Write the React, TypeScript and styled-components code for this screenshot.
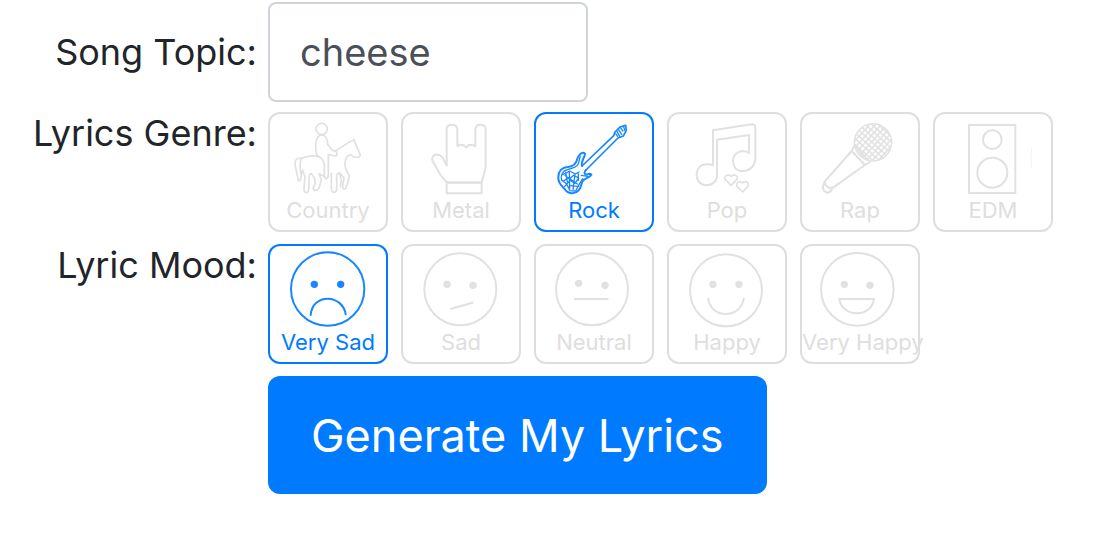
import React, { useState } from "react";
import styled, { createGlobalStyle } from "styled-components";

const GlobalStyle = createGlobalStyle`
  *, *::before, *::after { box-sizing: border-box; }
  body {
    margin: 0;
    background: #fff;
    color: #212529;
    font-family: Inter, "Liberation Sans", sans-serif;
  }
`;

const Form = styled.form`
  display: flex;
  flex-direction: column;
  gap: 12px;
  padding: 2px 0 40px;
`;

const Row = styled.div`
  display: grid;
  grid-template-columns: 257px 1fr;
  column-gap: 11px;
`;

const TopicRow = styled(Row)`
  align-items: center;
  margin-bottom: -2px;
`;

const Group = styled.fieldset`
  display: grid;
  grid-template-columns: 257px 1fr;
  column-gap: 11px;
  min-width: 0;
  margin: 0;
  padding: 0;
  border: 0;
`;

const fieldText = `
  font-size: 36px;
  line-height: 42px;
  text-align: right;
  white-space: nowrap;
`;

const FieldLabel = styled.label`
  ${fieldText}
`;

const GroupLabel = styled.legend`
  ${fieldText}
  float: left;
  width: 100%;
  padding: 0;
`;

const TopicInput = styled.input`
  width: 320px;
  height: 100px;
  padding: 0 30px;
  border: 2px solid #ced4da;
  border-radius: 8px;
  background: #fff;
  color: #495057;
  font-family: inherit;
  font-size: 38px;
`;

const Tiles = styled.div`
  display: flex;
  flex-wrap: wrap;
  gap: 12px 13px;
`;

const Tile = styled.label<{ $active: boolean }>`
  position: relative;
  width: 120px;
  height: 120px;
  padding-top: 4px;
  border: 2px solid currentColor;
  border-radius: 12px;
  color: ${(p) => (p.$active ? "#007bff" : "#dedede")};
  cursor: pointer;
`;

const HiddenRadio = styled.input`
  position: absolute;
  inset: 0;
  margin: 0;
  opacity: 0;
`;

const Icon = styled.svg`
  display: block;
  width: 80px;
  height: 80px;
  margin: 0 auto;
  fill: none;
  stroke: currentColor;
  stroke-width: 6;
  stroke-linecap: round;
  stroke-linejoin: round;
  opacity: 0.9;
`;

const TileText = styled.span`
  display: block;
  font-size: 22px;
  line-height: 24px;
  text-align: center;
  white-space: nowrap;
`;

const Submit = styled.button`
  grid-column: 2;
  justify-self: start;
  height: 118px;
  padding: 0 43px;
  border: 0;
  border-radius: 12px;
  background: #007bff;
  color: #fff;
  font-family: inherit;
  font-size: 45px;
  cursor: pointer;
`;

interface Option {
  name: string;
  viewBox: string;
  art: React.ReactNode;
}

const eye = (cx: number, cy: number) => (
  <circle cx={cx} cy={cy} r="11" fill="currentColor" stroke="none" />
);

const genres: Option[] = [
  {
    name: "Country",
    viewBox: "84 39 240 240",
    art: (
      <g strokeWidth="5">
        <circle cx="185" cy="72" r="17" />
        <path d="M178 92 C168 97 167 110 167 124 C167 146 170 152 178 156 C190 162 193 175 193 186 L193 216 C196 224 204 222 205 212 L205 148 L222 153 L230 152 L231 142 L215 134 L203 118 C202 102 198 90 186 90 Z" />
        <path d="M228 137 L266 112 L277 108 L282 103 L285 113 L301 150 L297 157 L283 156 L272 149 L262 154 C254 166 253 178 257 190 L268 214 L259 246 C257 254 248 254 248 246 L252 218 L238 203" />
        <path d="M214 205 L214 250 C214 266 230 266 230 252 L230 210 L238 204 L244 224 L241 246" />
        <path d="M175 154 C158 151 140 153 124 160 C108 158 103 168 106 184 L111 208 L116 228 C122 226 124 216 123 208 L128 196 L135 216 L132 252 C132 267 144 266 146 254 L148 210 L153 205 L163 218 L166 236 L159 249 C161 260 174 258 178 246 L184 224 L177 206 L193 214" />
        <path d="M124 160 C118 174 119 188 123 208" />
      </g>
    ),
  },
  {
    name: "Metal",
    viewBox: "78 39 240 240",
    art: (
      <>
        <path d="M155 181 L155 72 C156 55 185 55 187 72 L187 123 L195 119 L206 121 L214 127 L222 120 L232 119 L241 124 L241 72 C243 55 270 55 272 72 L272 188 L260 232 L155 232 C147 222 136 213 130 198 L113 168 C107 154 122 145 135 151 C144 156 148 168 155 181" />
        <path d="M155 233 H260 V265 H155 Z" />
      </>
    ),
  },
  {
    name: "Rock",
    viewBox: "78 39 240 240",
    art: (
      <>
        <path d="M162 183 L258 91 L260 82 L276 66 L293 61 L295 76 L286 93 L270 99 L174 195" strokeWidth="5" />
        <path d="M263 86 L269 94 M277 68 L285 78 M286 63 L291 77 M271 73 L281 88 M267 79 L275 94" strokeWidth="4" />
        <path d="M162 183 C158 168 171 157 171 146 C164 139 151 149 148 161 C146 174 136 184 120 186 C102 187 91 199 91 216 C89 233 101 243 110 252 C119 267 141 269 151 257 C162 247 158 234 166 226 C174 219 185 218 190 209 C185 203 180 209 173 209 C168 206 169 199 174 195" />
        <path d="M157 153 C153 163 155 172 148 181 C140 190 127 190 116 195 C101 199 98 213 101 225 M104 209 L125 198 L142 207 L153 201 M101 225 L116 237 L126 257 L143 258 L153 239 L164 221 M111 211 L124 222 L137 211 L152 219 L141 235 L127 226 L116 237 M124 202 L125 250 M141 207 L135 253 M106 229 L120 218 L148 237 M128 242 L151 244 M110 244 L123 230 M151 206 L151 226 M113 203 L118 230 M160 211 L180 214" strokeWidth="4" />
      </>
    ),
  },
  {
    name: "Pop",
    viewBox: "81 39 240 240",
    art: (
      <>
        <path d="M159 180 L159 76 L274 58 Q286 58 286 68 L286 164 C282 185 269 198 249 198 C228 198 219 184 219 168 C219 148 235 138 249 138 Q260 139 267 144 L267 90 L171 104 L171 217 C166 232 154 241 139 241 C122 240 110 228 110 209 C110 190 123 178 139 178 Q150 177 159 180 Z" />
        <path d="M213 241 L196 224 C191 214 203 204 213 214 C224 204 236 214 230 224 Z M248 261 L231 244 C227 234 238 224 248 234 C258 224 268 234 264 244 Z" strokeWidth="5" />
      </>
    ),
  },
  {
    name: "Rap",
    viewBox: "81 39 240 240",
    art: (
      <>
        <defs>
          <pattern id="mesh" width="13" height="13" patternUnits="userSpaceOnUse" patternTransform="rotate(42)">
            <path d="M0 0 H13 M0 0 V13" stroke="currentColor" strokeWidth="9" />
          </pattern>
        </defs>
        <circle cx="240" cy="112" r="56" fill="url(#mesh)" strokeWidth="4" />
        <path d="M184 122 L176 138 L216 180 L231 171 M190 128 L226 166" />
        <path d="M176 138 L95 230 L98 241 L109 250 L121 247 L216 180 M95 232 L89 245 L92 257 L103 264 L114 258 L118 249" />
      </>
    ),
  },
  {
    name: "EDM",
    viewBox: "84 39 240 240",
    art: (
      <>
        <rect x="132" y="60" width="139" height="204" />
        <circle cx="202" cy="104" r="28" />
        <circle cx="202" cy="203" r="45" />
        <path d="M320 130 Q316 157 320 190" strokeWidth="2" opacity="0.6" />
      </>
    ),
  },
];

const moods: Option[] = [
  {
    name: "Very Sad",
    viewBox: "84 36 240 240",
    art: (
      <>
        <circle cx="203" cy="153" r="110" />
        {eye(163, 139)}
        {eye(242, 139)}
        <path d="M152 231 C155 198 177 182 203 182 C231 182 253 202 257 229" />
      </>
    ),
  },
  {
    name: "Sad",
    viewBox: "483 36 240 240",
    art: (
      <>
        <circle cx="601" cy="154" r="108" />
        {eye(561, 139)}
        {eye(639, 142)}
        <path d="M573 212 L638 194" />
      </>
    ),
  },
  {
    name: "Neutral",
    viewBox: "78 36 240 240",
    art: (
      <>
        <circle cx="192" cy="154" r="108" />
        {eye(152, 136)}
        {eye(231, 142)}
        <path d="M140 183 H239" />
      </>
    ),
  },
  {
    name: "Happy",
    viewBox: "477 36 240 240",
    art: (
      <>
        <circle cx="594" cy="157" r="108" />
        {eye(555, 139)}
        {eye(633, 139)}
        <path d="M541 182 C544 211 567 228 594 228 C621 228 643 210 647 182" />
      </>
    ),
  },
  {
    name: "Very Happy",
    viewBox: "876 36 240 240",
    art: (
      <>
        <circle cx="988" cy="154" r="109" />
        {eye(949, 139)}
        {eye(1026, 142)}
        <path d="M934 183 H1038 C1034 210 1013 226 987 226 C960 226 938 210 934 183 Z" />
      </>
    ),
  },
];

interface PickerProps {
  label: string;
  name: string;
  options: Option[];
  initial: string;
}

function Picker({ label, name, options, initial }: PickerProps) {
  const [value, setValue] = useState(initial);
  return (
    <Group>
      <GroupLabel>{label}</GroupLabel>
      <Tiles>
        {options.map((o) => (
          <Tile key={o.name} $active={o.name === value}>
            <HiddenRadio
              type="radio"
              name={name}
              value={o.name}
              checked={o.name === value}
              onChange={() => setValue(o.name)}
            />
            <Icon viewBox={o.viewBox} aria-hidden="true">
              {o.art}
            </Icon>
            <TileText>{o.name}</TileText>
          </Tile>
        ))}
      </Tiles>
    </Group>
  );
}

export default function App() {
  return (
    <>
      <GlobalStyle />
      <Form onSubmit={(e) => e.preventDefault()}>
        <TopicRow>
          <FieldLabel htmlFor="topic">Song Topic:</FieldLabel>
          <TopicInput id="topic" type="text" defaultValue="cheese" />
        </TopicRow>
        <Picker label="Lyrics Genre:" name="genre" options={genres} initial="Rock" />
        <Picker label="Lyric Mood:" name="mood" options={moods} initial="Very Sad" />
        <Row>
          <Submit type="submit">Generate My Lyrics</Submit>
        </Row>
      </Form>
    </>
  );
}
